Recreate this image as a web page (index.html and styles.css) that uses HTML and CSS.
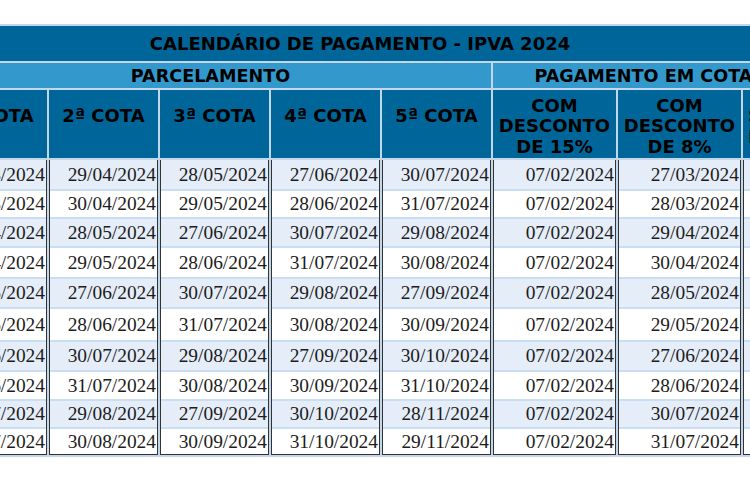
FILE: index.html
```html
<!DOCTYPE html>
<html lang="pt-BR">
<head>
<meta charset="utf-8">
<title>Calendário de Pagamento - IPVA 2024</title>
<link rel="stylesheet" href="styles.css">
</head>
<body>
<table class="cal">
  <colgroup>
    <col class="c-cota"><col class="c-cota"><col class="c-cota"><col class="c-cota"><col class="c-cota">
    <col class="c-desc"><col class="c-desc"><col class="c-sem">
  </colgroup>
  <tr class="r-title"><th colspan="8" class="title">CALENDÁRIO DE PAGAMENTO - IPVA 2024</th></tr>
  <tr class="r-sub">
    <th colspan="5" class="sub sub-parc">PARCELAMENTO</th>
    <th colspan="3" class="sub sub-unica">PAGAMENTO EM COTA ÚNICA</th>
  </tr>
  <tr class="r-head">
    <th class="head cota">1ª COTA</th>
    <th class="head cota">2ª COTA</th>
    <th class="head cota">3ª COTA</th>
    <th class="head cota">4ª COTA</th>
    <th class="head cota">5ª COTA</th>
    <th class="head">COM DESCONTO DE 15%</th>
    <th class="head">COM DESCONTO DE 8%</th>
    <th class="head sem">SEM DESCONTO</th>
  </tr>
  <tr class="r-body">
    <td><div class="d">27/03/2024</div><div class="d">28/03/2024</div><div class="d">29/04/2024</div><div class="d">30/04/2024</div><div class="d">28/05/2024</div><div class="d">29/05/2024</div><div class="d">27/06/2024</div><div class="d">28/06/2024</div><div class="d">30/07/2024</div><div class="d">31/07/2024</div></td>
    <td><div class="d">29/04/2024</div><div class="d">30/04/2024</div><div class="d">28/05/2024</div><div class="d">29/05/2024</div><div class="d">27/06/2024</div><div class="d">28/06/2024</div><div class="d">30/07/2024</div><div class="d">31/07/2024</div><div class="d">29/08/2024</div><div class="d">30/08/2024</div></td>
    <td><div class="d">28/05/2024</div><div class="d">29/05/2024</div><div class="d">27/06/2024</div><div class="d">28/06/2024</div><div class="d">30/07/2024</div><div class="d">31/07/2024</div><div class="d">29/08/2024</div><div class="d">30/08/2024</div><div class="d">27/09/2024</div><div class="d">30/09/2024</div></td>
    <td><div class="d">27/06/2024</div><div class="d">28/06/2024</div><div class="d">30/07/2024</div><div class="d">31/07/2024</div><div class="d">29/08/2024</div><div class="d">30/08/2024</div><div class="d">27/09/2024</div><div class="d">30/09/2024</div><div class="d">30/10/2024</div><div class="d">31/10/2024</div></td>
    <td><div class="d">30/07/2024</div><div class="d">31/07/2024</div><div class="d">29/08/2024</div><div class="d">30/08/2024</div><div class="d">27/09/2024</div><div class="d">30/09/2024</div><div class="d">30/10/2024</div><div class="d">31/10/2024</div><div class="d">28/11/2024</div><div class="d">29/11/2024</div></td>
    <td><div class="d">07/02/2024</div><div class="d">07/02/2024</div><div class="d">07/02/2024</div><div class="d">07/02/2024</div><div class="d">07/02/2024</div><div class="d">07/02/2024</div><div class="d">07/02/2024</div><div class="d">07/02/2024</div><div class="d">07/02/2024</div><div class="d">07/02/2024</div></td>
    <td><div class="d">27/03/2024</div><div class="d">28/03/2024</div><div class="d">29/04/2024</div><div class="d">30/04/2024</div><div class="d">28/05/2024</div><div class="d">29/05/2024</div><div class="d">27/06/2024</div><div class="d">28/06/2024</div><div class="d">30/07/2024</div><div class="d">31/07/2024</div></td>
    <td><div class="d">27/03/2024</div><div class="d">28/03/2024</div><div class="d">29/04/2024</div><div class="d">30/04/2024</div><div class="d">28/05/2024</div><div class="d">29/05/2024</div><div class="d">27/06/2024</div><div class="d">28/06/2024</div><div class="d">30/07/2024</div><div class="d">31/07/2024</div></td>
  </tr>
</table>
</body>
</html>
```
FILE: styles.css
```css
html, body {
  margin: 0;
  padding: 0;
  background: #ffffff;
  overflow: hidden;
}

.cal {
  border-collapse: separate;
  border-spacing: 2px;
  background: #c3d7ea;
  margin: 24px 0 0 -64px;
  table-layout: fixed;
  width: 922px;
}

.c-cota { width: 109px; }
.c-desc { width: 123px; }
.c-sem { width: 113px; }

th {
  font-family: "DejaVu Sans", Verdana, sans-serif;
  font-weight: bold;
  font-size: 18px;
  line-height: 20.5px;
  color: #000;
  text-align: center;
  vertical-align: middle;
  padding: 0;
}

.r-title { height: 35px; }
.r-sub { height: 25px; }
.r-head { height: 68px; }

.title {
  background: #006699;
  padding: 1px 74px 0 0;
}

.sub {
  background: #3399cc;
  font-size: 17.6px;
  padding-top: 2px;
}

.sub-parc {
  padding-right: 8px;
}

.sub-unica {
  padding-left: 6px;
}

.head {
  background: #006699;
  padding-top: 5px;
}

.head.cota {
  padding-bottom: 20px;
}

.head.sem {
  text-align: left;
  padding-left: 5px;
}

td {
  padding: 0;
  vertical-align: top;
  border: 1px solid #333;
  border-top: none;
  background: #fff;
}

.d {
  box-sizing: border-box;
  display: flex;
  align-items: center;
  justify-content: flex-end;
  padding-right: 1px;
  font-family: "Liberation Serif", "Times New Roman", serif;
  font-size: 19.4px;
  color: #1c1c1c;
  border-top: 2px solid #c9ddf3;
}

.d:nth-child(odd) { background: #e5edf8; }
.d:nth-child(even) { background: #ffffff; }

.d:nth-child(1) { height: 29px; border-top: none; }
.d:nth-child(2) { height: 28px; }
.d:nth-child(3) { height: 29px; }
.d:nth-child(4) { height: 31px; }
.d:nth-child(5) { height: 30px; }
.d:nth-child(6) { height: 33px; }
.d:nth-child(7) { height: 30px; }
.d:nth-child(8) { height: 29px; }
.d:nth-child(9) { height: 28px; }
.d:nth-child(10) { height: 27px; }
```
